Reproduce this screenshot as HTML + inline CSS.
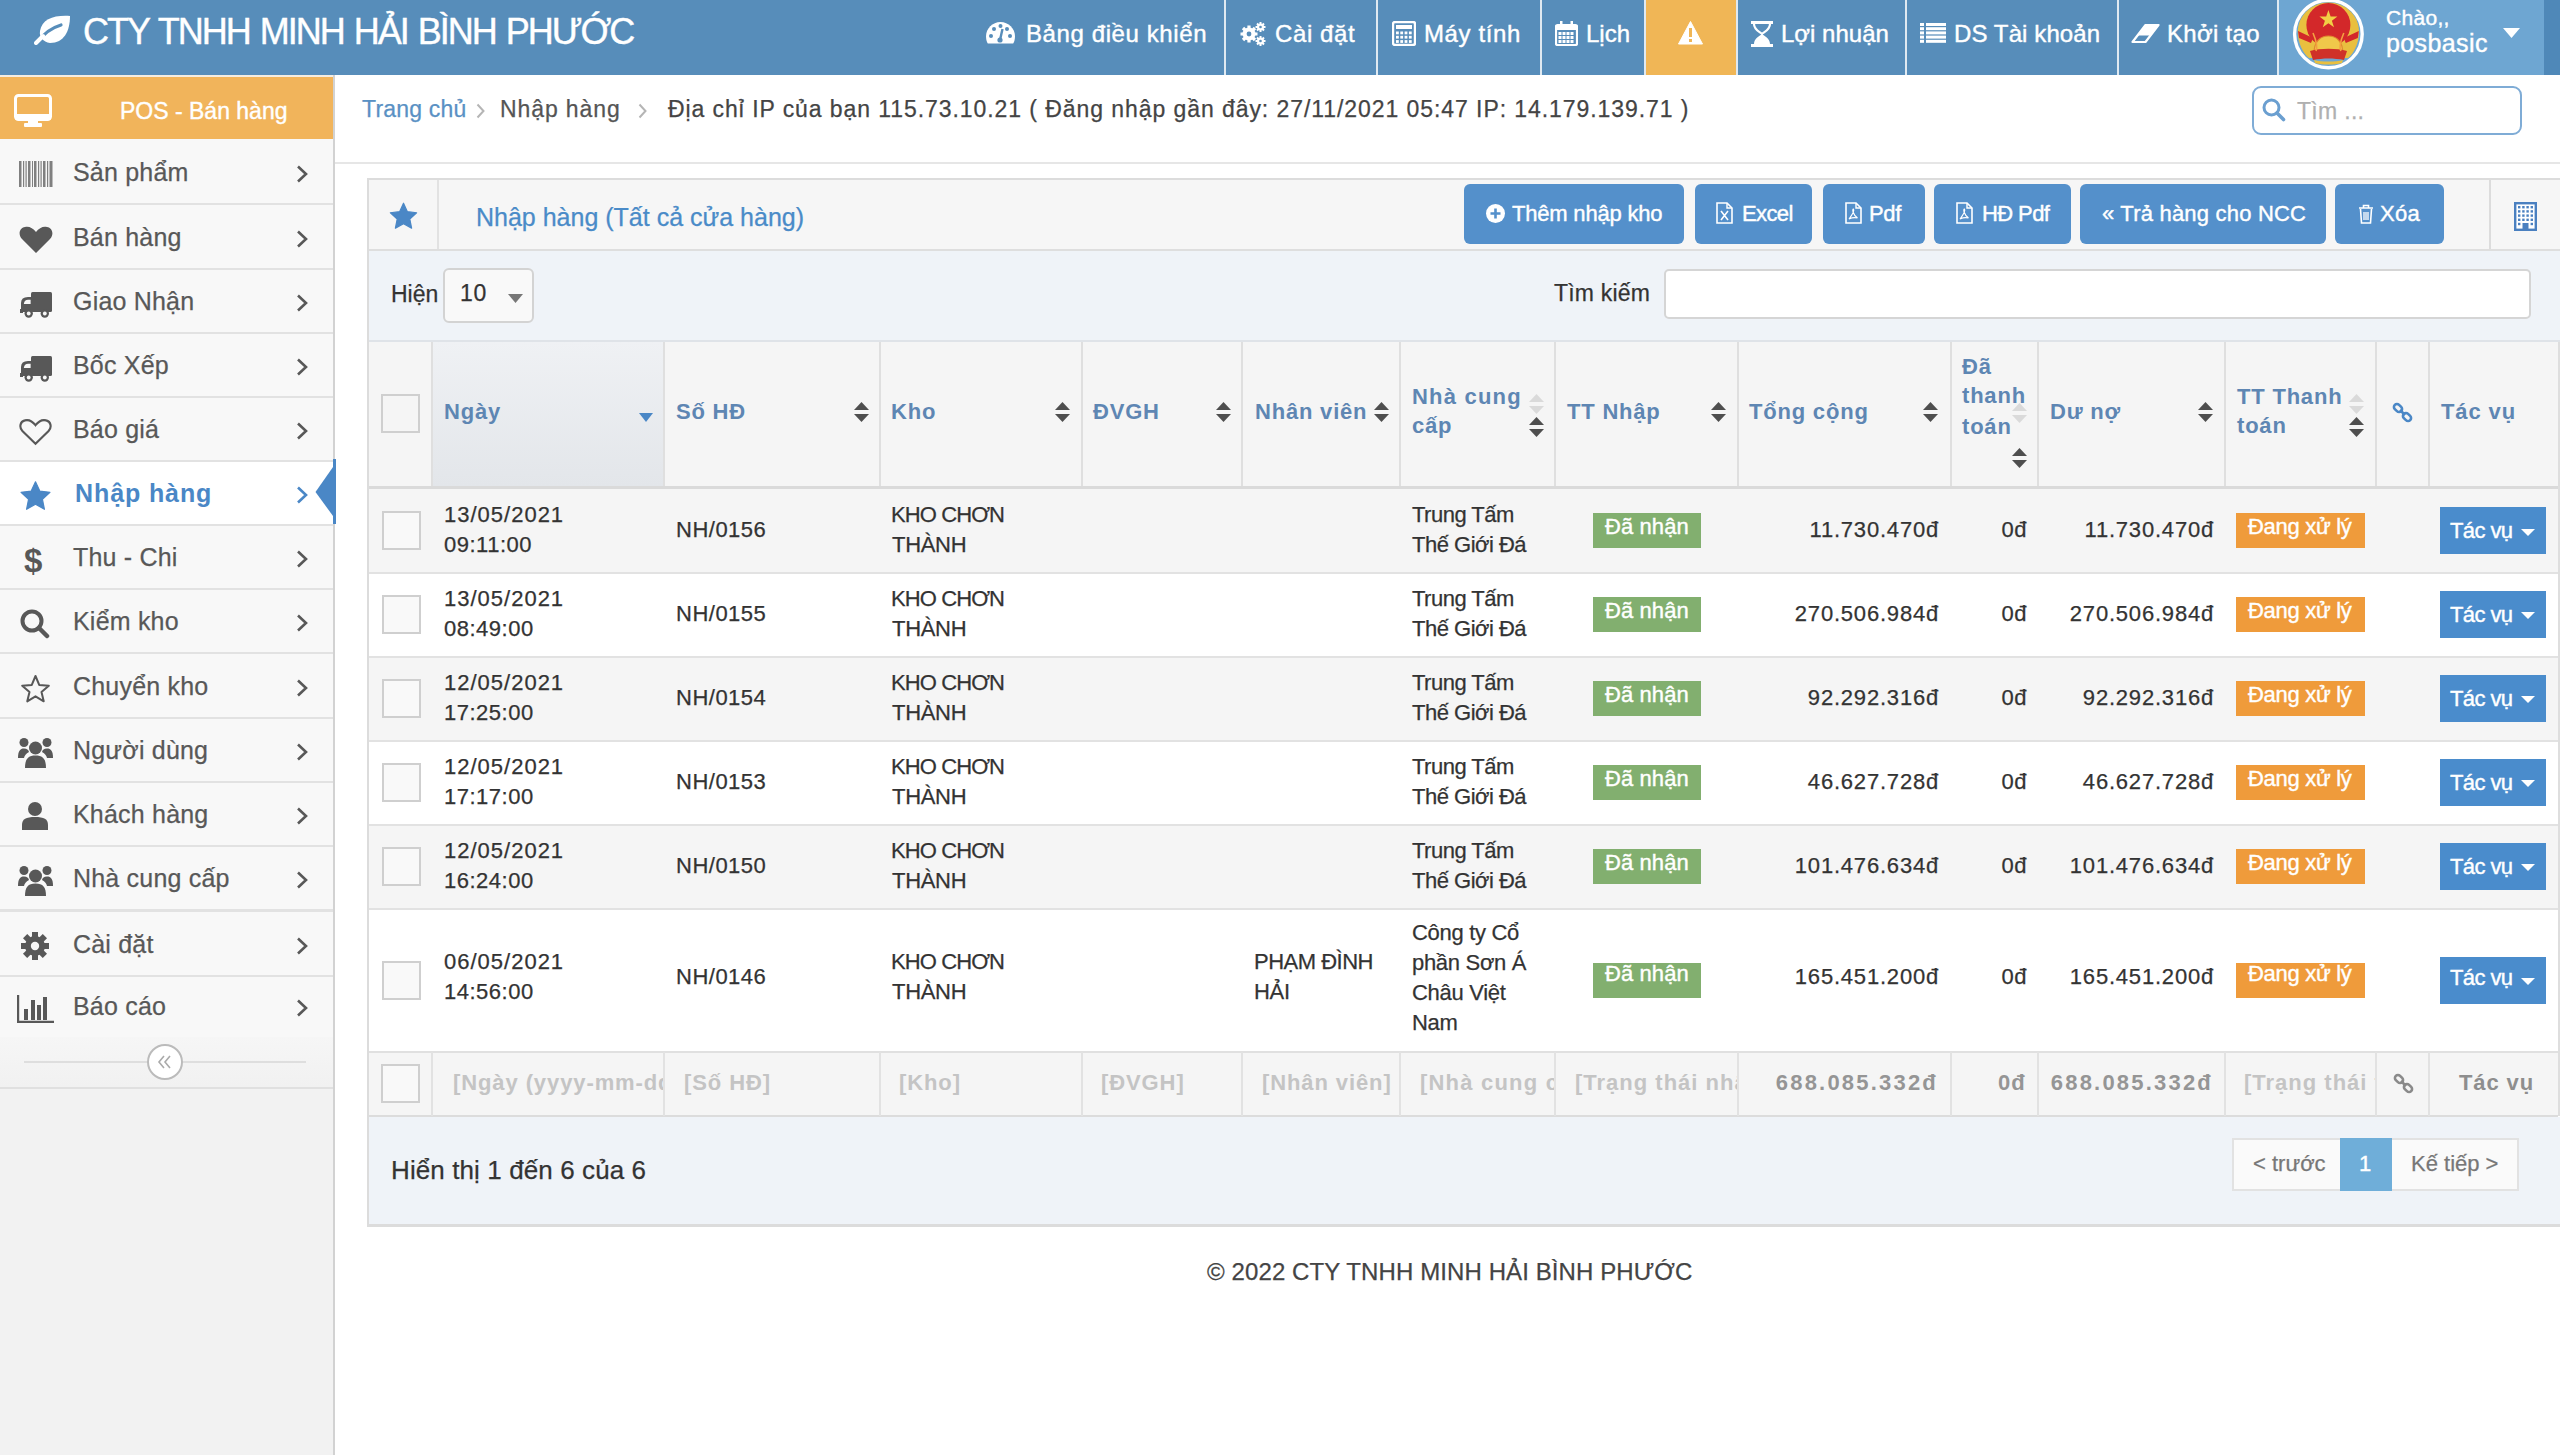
<!DOCTYPE html><html><head><meta charset="utf-8"><style>
html,body{margin:0;padding:0;}
body{width:2560px;height:1455px;overflow:hidden;position:relative;background:#fff;font-family:"Liberation Sans", sans-serif;}
.t{position:absolute;white-space:nowrap;line-height:1;-webkit-text-stroke-width:0.25px;}
.w{-webkit-text-stroke-width:0.4px;}
.bd{-webkit-text-stroke-width:0;}
.b{position:absolute;}
</style></head><body>
<div class="b" style="left:0px;top:0px;width:2560px;height:75px;background:#578dba"></div>
<div class="b" style="left:2278px;top:0px;width:266px;height:75px;background:#6ea6d2"></div>
<div class="b" style="left:2544px;top:0px;width:16px;height:75px;background:#4f88b8"></div>
<div class="b" style="left:1645px;top:0px;width:91px;height:75px;background:#f0b656"></div>
<div class="b" style="left:1224px;top:0px;width:2px;height:75px;background:#dfe9f1"></div>
<div class="b" style="left:1376px;top:0px;width:2px;height:75px;background:#dfe9f1"></div>
<div class="b" style="left:1540px;top:0px;width:2px;height:75px;background:#dfe9f1"></div>
<div class="b" style="left:1644px;top:0px;width:2px;height:75px;background:#dfe9f1"></div>
<div class="b" style="left:1736px;top:0px;width:2px;height:75px;background:#dfe9f1"></div>
<div class="b" style="left:1905px;top:0px;width:2px;height:75px;background:#dfe9f1"></div>
<div class="b" style="left:2117px;top:0px;width:2px;height:75px;background:#dfe9f1"></div>
<div class="b" style="left:2277px;top:0px;width:2px;height:75px;background:#dfe9f1"></div>
<svg class="b" style="left:34px;top:15px;" width="38" height="30" viewBox="0 0 38 30"><path d="M36 1 C20 0 8 4 6 16 C5 22 9 27 16 28 C30 28 36 16 36 1 Z" fill="#fff"/><path d="M4 27 C10 18 17 13 27 10" stroke="#578dba" stroke-width="3.2" fill="none" stroke-linecap="round"/><path d="M2 28 L9 21" stroke="#fff" stroke-width="4" stroke-linecap="round"/></svg>
<div class="t w" style="left:83px;top:14.0px;font-size:36px;color:#fff;font-weight:400;letter-spacing:-2.0px;word-spacing:2px;">CTY TNHH MINH HẢI BÌNH PHƯỚC</div>
<svg class="b" style="left:986px;top:22px;" width="29" height="22" viewBox="0 0 29 22"><path d="M14.5 0 C6.5 0 0 6.5 0 14.5 C0 17 0.6 19.5 1.8 21.5 L27.2 21.5 C28.4 19.5 29 17 29 14.5 C29 6.5 22.5 0 14.5 0 Z" fill="#fff"/><circle cx="5" cy="14" r="2" fill="#578dba"/><circle cx="8" cy="7" r="2" fill="#578dba"/><circle cx="14.5" cy="4" r="2" fill="#578dba"/><circle cx="24" cy="14" r="2" fill="#578dba"/><circle cx="21" cy="7" r="2" fill="#578dba"/><path d="M14 18 L16.5 7" stroke="#578dba" stroke-width="2.4"/><circle cx="14" cy="18" r="2.6" fill="#578dba"/></svg>
<div class="t w" style="left:1026px;top:22.2px;font-size:24px;color:#fff;font-weight:400;letter-spacing:0.6px;">Bảng điều khiển</div>
<svg class="b" style="left:1240px;top:21px;" width="26" height="26" viewBox="0 0 26 26"><g fill="#fff"><circle cx="9" cy="13" r="6.5"/><g stroke="#fff" stroke-width="3.2"><path d="M9 4.5v17M0.5 13h17M3 7l12 12M15 7L3 19"/></g><circle cx="9" cy="13" r="2.4" fill="#578dba"/><circle cx="20.5" cy="6" r="3.5"/><g stroke="#fff" stroke-width="2"><path d="M20.5 1v10M15.5 6h10M17 2.5l7 7M24 2.5l-7 7"/></g><circle cx="20.5" cy="6" r="1.3" fill="#578dba"/><circle cx="20.5" cy="20" r="3.5"/><g stroke="#fff" stroke-width="2"><path d="M20.5 15v10M15.5 20h10M17 16.5l7 7M24 16.5l-7 7"/></g><circle cx="20.5" cy="20" r="1.3" fill="#578dba"/></g></svg>
<div class="t w" style="left:1275px;top:22.2px;font-size:24px;color:#fff;font-weight:400;letter-spacing:0.6px;">Cài đặt</div>
<svg class="b" style="left:1392px;top:21px;" width="24" height="25" viewBox="0 0 24 25"><rect x="1" y="1" width="22" height="23" rx="2" fill="none" stroke="#fff" stroke-width="2.4"/><rect x="4" y="4" width="16" height="4" fill="#fff"/><rect x="4.0" y="10.5" width="2.8" height="2.8" fill="#fff"/><rect x="8.3" y="10.5" width="2.8" height="2.8" fill="#fff"/><rect x="12.6" y="10.5" width="2.8" height="2.8" fill="#fff"/><rect x="16.9" y="10.5" width="2.8" height="2.8" fill="#fff"/><rect x="4.0" y="14.8" width="2.8" height="2.8" fill="#fff"/><rect x="8.3" y="14.8" width="2.8" height="2.8" fill="#fff"/><rect x="12.6" y="14.8" width="2.8" height="2.8" fill="#fff"/><rect x="16.9" y="14.8" width="2.8" height="2.8" fill="#fff"/><rect x="4.0" y="19.1" width="2.8" height="2.8" fill="#fff"/><rect x="8.3" y="19.1" width="2.8" height="2.8" fill="#fff"/><rect x="12.6" y="19.1" width="2.8" height="2.8" fill="#fff"/><rect x="16.9" y="19.1" width="2.8" height="2.8" fill="#fff"/></svg>
<div class="t w" style="left:1424px;top:22.2px;font-size:24px;color:#fff;font-weight:400;letter-spacing:0.6px;">Máy tính</div>
<svg class="b" style="left:1555px;top:21px;" width="23" height="25" viewBox="0 0 23 25"><rect x="1" y="4" width="21" height="20" rx="1.5" fill="none" stroke="#fff" stroke-width="2.2"/><rect x="1" y="4" width="21" height="5" fill="#fff"/><rect x="5" y="0" width="2.5" height="6" fill="#fff"/><rect x="15.5" y="0" width="2.5" height="6" fill="#fff"/><rect x="3.5" y="11.0" width="3" height="3" fill="#fff"/><rect x="7.5" y="11.0" width="3" height="3" fill="#fff"/><rect x="11.5" y="11.0" width="3" height="3" fill="#fff"/><rect x="15.5" y="11.0" width="3" height="3" fill="#fff"/><rect x="3.5" y="15.0" width="3" height="3" fill="#fff"/><rect x="7.5" y="15.0" width="3" height="3" fill="#fff"/><rect x="11.5" y="15.0" width="3" height="3" fill="#fff"/><rect x="15.5" y="15.0" width="3" height="3" fill="#fff"/><rect x="3.5" y="19.0" width="3" height="3" fill="#fff"/><rect x="7.5" y="19.0" width="3" height="3" fill="#fff"/><rect x="11.5" y="19.0" width="3" height="3" fill="#fff"/><rect x="15.5" y="19.0" width="3" height="3" fill="#fff"/></svg>
<div class="t w" style="left:1586px;top:22.2px;font-size:24px;color:#fff;font-weight:400;letter-spacing:0px;">Lịch</div>
<svg class="b" style="left:1678px;top:21px;" width="25" height="24" viewBox="0 0 25 24"><path d="M12.5 0.5 L24.5 23 L0.5 23 Z" fill="#fff" stroke="#fff" stroke-linejoin="round" stroke-width="1"/><rect x="11" y="7" width="3" height="9" fill="#f0b656"/><rect x="11" y="18" width="3" height="3" fill="#f0b656"/></svg>
<svg class="b" style="left:1751px;top:21px;" width="22" height="26" viewBox="0 0 22 26"><rect x="0" y="0" width="22" height="3" fill="#fff"/><rect x="0" y="23" width="22" height="3" fill="#fff"/><path d="M3 3 C3 9 9 11 11 13 C13 11 19 9 19 3" fill="none" stroke="#fff" stroke-width="2.2"/><path d="M3 23 C3 17 9 15 11 13 C13 15 19 17 19 23 Z" fill="#fff"/></svg>
<div class="t w" style="left:1781px;top:22.2px;font-size:24px;color:#fff;font-weight:400;letter-spacing:0px;">Lợi nhuận</div>
<svg class="b" style="left:1920px;top:23px;" width="26" height="20" viewBox="0 0 26 20"><rect x="0" y="0.0" width="4" height="3" fill="#fff"/><rect x="6" y="0.0" width="20" height="3" fill="#fff"/><rect x="0" y="4.2" width="4" height="3" fill="#fff"/><rect x="6" y="4.2" width="20" height="3" fill="#fff"/><rect x="0" y="8.4" width="4" height="3" fill="#fff"/><rect x="6" y="8.4" width="20" height="3" fill="#fff"/><rect x="0" y="12.6" width="4" height="3" fill="#fff"/><rect x="6" y="12.6" width="20" height="3" fill="#fff"/><rect x="0" y="16.8" width="4" height="3" fill="#fff"/><rect x="6" y="16.8" width="20" height="3" fill="#fff"/></svg>
<div class="t w" style="left:1954px;top:22.2px;font-size:24px;color:#fff;font-weight:400;letter-spacing:0.1px;">DS Tài khoản</div>
<svg class="b" style="left:2131px;top:24px;" width="29" height="20" viewBox="0 0 29 20"><path d="M14.5 1 L27.5 1 L14.5 18 L1.5 18 Z" fill="none" stroke="#fff" stroke-width="2.2" stroke-linejoin="round"/><path d="M14.5 1 L27.5 1 L19.5 11.5 L6.5 11.5 Z" fill="#fff"/></svg>
<div class="t w" style="left:2167px;top:22.2px;font-size:24px;color:#fff;font-weight:400;letter-spacing:0.3px;">Khởi tạo</div>
<svg class="b" style="left:2292px;top:-2px;" width="74" height="74" viewBox="0 0 74 74"><circle cx="36.4" cy="36" r="33.8" fill="#6ea6d2" stroke="#fff" stroke-width="3.4"/><path d="M36.4 4.5 C53 4.5 67 17 67 34 C67 45 62 55 56 60 L17 60 C11 55 5.8 45 5.8 34 C5.8 17 20 4.5 36.4 4.5 Z" fill="#e9bf3f"/><circle cx="36.4" cy="27" r="22" fill="#d3282a"/><path d="M6 33 L21 40 L19 45 L7 40 Z M66.8 33 L51.8 40 L53.8 45 L65.8 40 Z" fill="#d3282a"/><path d="M36.4 12 L38.6 18.6 L45.4 18.6 L39.9 22.7 L42 29.3 L36.4 25.2 L30.8 29.3 L32.9 22.7 L27.4 18.6 L34.2 18.6 Z" fill="#f2cf45"/><path d="M22 55 C22 44 28 38 36.4 38 C44.8 38 50.8 44 50.8 55 Z" fill="#f0c84a" stroke="#e08a30" stroke-width="1.2"/><path d="M18 53 C28 50 45 50 55 53 L52 62 C42 60 31 60 21 62 Z" fill="#cf3128"/><path d="M22 62 C30 64 43 64 51 62 L50 65 C42 67 31 67 23 65 Z" fill="#e9bf3f"/><path d="M21 35 C24 42 26 48 24 53 M51.8 35 C48.8 42 46.8 48 48.8 53" stroke="#f3a040" stroke-width="1.6" fill="none"/></svg>
<div class="t w" style="left:2386px;top:6.7px;font-size:21px;color:#fff;font-weight:400;letter-spacing:0.3px;">Chào,,</div>
<div class="t w" style="left:2386px;top:31.3px;font-size:25px;color:#fff;font-weight:400;letter-spacing:0.4px;">posbasic</div>
<svg class="b" style="left:2503px;top:28px;" width="17" height="10" viewBox="0 0 17 10"><path d="M0 0 L17 0 L8.5 10 Z" fill="#fff"/></svg>
<div class="b" style="left:0px;top:75px;width:333px;height:1380px;background:#f2f2f2"></div>
<div class="b" style="left:333px;top:75px;width:2px;height:1380px;background:#d2d2d2"></div>
<div class="b" style="left:0px;top:75px;width:333px;height:2px;background:#f4ede2"></div>
<div class="b" style="left:0px;top:77px;width:333px;height:62px;background:#f1b45b"></div>
<svg class="b" style="left:14px;top:94px;" width="38" height="33" viewBox="0 0 38 33"><rect x="1.5" y="1.5" width="35" height="24" rx="3" fill="none" stroke="#fff" stroke-width="3"/><rect x="1.5" y="20" width="35" height="6" fill="#fff"/><rect x="14" y="26" width="10" height="4" fill="#fff"/><rect x="10" y="29" width="18" height="4" rx="1" fill="#fff"/></svg>
<div class="t w" style="left:120px;top:99.5px;font-size:23px;color:#fff;font-weight:400;letter-spacing:0px;">POS - Bán hàng</div>
<div class="b" style="left:0px;top:139px;width:333px;height:64px;background:#f8f8f8"></div>
<div class="b" style="left:0px;top:203px;width:333px;height:2px;background:#e2e2e2"></div>
<svg class="b" style="left:19px;top:161px;" width="34" height="26" viewBox="0 0 34 26"><rect x="0" y="0" width="2.5" height="26" fill="#808080"/><rect x="4" y="0" width="1.2" height="26" fill="#808080"/><rect x="6.5" y="0" width="1.2" height="26" fill="#808080"/><rect x="9" y="0" width="2.5" height="26" fill="#808080"/><rect x="13" y="0" width="1" height="26" fill="#808080"/><rect x="15" y="0" width="2.5" height="26" fill="#808080"/><rect x="19" y="0" width="1.2" height="26" fill="#808080"/><rect x="21.5" y="0" width="1.2" height="26" fill="#808080"/><rect x="24" y="0" width="2.5" height="26" fill="#808080"/><rect x="28" y="0" width="1.2" height="26" fill="#808080"/><rect x="30.5" y="0" width="3" height="26" fill="#808080"/></svg>
<div class="t" style="left:73px;top:159.8px;font-size:25px;color:#585858;font-weight:400;letter-spacing:0.2px;">Sản phẩm</div>
<svg class="b" style="left:296px;top:165px;" width="12" height="18" viewBox="0 0 12 18"><path d="M2 1.5 L10 9 L2 16.5" fill="none" stroke="#585858" stroke-width="2.6"/></svg>
<div class="b" style="left:0px;top:205px;width:333px;height:63px;background:#f8f8f8"></div>
<div class="b" style="left:0px;top:268px;width:333px;height:2px;background:#e2e2e2"></div>
<svg class="b" style="left:19px;top:226px;" width="34" height="28" viewBox="0 0 34 28"><path d="M17 27 L3 13 C-1 9 0 2 6 1 C10 0 14 2 17 6 C20 2 24 0 28 1 C34 2 35 9 31 13 Z" fill="#585858"/></svg>
<div class="t" style="left:73px;top:224.8px;font-size:25px;color:#585858;font-weight:400;letter-spacing:0.2px;">Bán hàng</div>
<svg class="b" style="left:296px;top:230px;" width="12" height="18" viewBox="0 0 12 18"><path d="M2 1.5 L10 9 L2 16.5" fill="none" stroke="#585858" stroke-width="2.6"/></svg>
<div class="b" style="left:0px;top:270px;width:333px;height:62px;background:#f8f8f8"></div>
<div class="b" style="left:0px;top:332px;width:333px;height:2px;background:#e2e2e2"></div>
<svg class="b" style="left:20px;top:292px;" width="33" height="26" viewBox="0 0 33 26"><rect x="11" y="0" width="21" height="20" rx="1.5" fill="#585858"/><path d="M1 20 L1 11 Q1 5 8 5 L12 5 L12 20 Z" fill="#585858"/><path d="M3.8 12 Q4.5 7.8 8 7.8 L10.6 7.8 L10.6 12 Z" fill="#f8f8f8"/><rect x="0" y="17" width="3" height="4" fill="#585858"/><circle cx="8.7" cy="21.5" r="4.2" fill="#585858"/><circle cx="24.8" cy="21.5" r="4.2" fill="#585858"/><circle cx="8.7" cy="21.5" r="1.9" fill="#f8f8f8"/><circle cx="24.8" cy="21.5" r="1.9" fill="#f8f8f8"/></svg>
<div class="t" style="left:73px;top:288.8px;font-size:25px;color:#585858;font-weight:400;letter-spacing:0.2px;">Giao Nhận</div>
<svg class="b" style="left:296px;top:294px;" width="12" height="18" viewBox="0 0 12 18"><path d="M2 1.5 L10 9 L2 16.5" fill="none" stroke="#585858" stroke-width="2.6"/></svg>
<div class="b" style="left:0px;top:334px;width:333px;height:62px;background:#f8f8f8"></div>
<div class="b" style="left:0px;top:396px;width:333px;height:2px;background:#e2e2e2"></div>
<svg class="b" style="left:20px;top:356px;" width="33" height="26" viewBox="0 0 33 26"><rect x="11" y="0" width="21" height="20" rx="1.5" fill="#585858"/><path d="M1 20 L1 11 Q1 5 8 5 L12 5 L12 20 Z" fill="#585858"/><path d="M3.8 12 Q4.5 7.8 8 7.8 L10.6 7.8 L10.6 12 Z" fill="#f8f8f8"/><rect x="0" y="17" width="3" height="4" fill="#585858"/><circle cx="8.7" cy="21.5" r="4.2" fill="#585858"/><circle cx="24.8" cy="21.5" r="4.2" fill="#585858"/><circle cx="8.7" cy="21.5" r="1.9" fill="#f8f8f8"/><circle cx="24.8" cy="21.5" r="1.9" fill="#f8f8f8"/></svg>
<div class="t" style="left:73px;top:352.8px;font-size:25px;color:#585858;font-weight:400;letter-spacing:0.2px;">Bốc Xếp</div>
<svg class="b" style="left:296px;top:358px;" width="12" height="18" viewBox="0 0 12 18"><path d="M2 1.5 L10 9 L2 16.5" fill="none" stroke="#585858" stroke-width="2.6"/></svg>
<div class="b" style="left:0px;top:398px;width:333px;height:62px;background:#f8f8f8"></div>
<div class="b" style="left:0px;top:460px;width:333px;height:2px;background:#e2e2e2"></div>
<svg class="b" style="left:19px;top:418px;" width="33" height="28" viewBox="0 0 34 28"><path d="M17 26 L3.5 13 C0 9.5 1 3 6 2 C10 1 14 3 17 7 C20 3 24 1 28 2 C33 3 34 9.5 30.5 13 Z" fill="none" stroke="#585858" stroke-width="2.2"/></svg>
<div class="t" style="left:73px;top:416.8px;font-size:25px;color:#585858;font-weight:400;letter-spacing:0.2px;">Báo giá</div>
<svg class="b" style="left:296px;top:422px;" width="12" height="18" viewBox="0 0 12 18"><path d="M2 1.5 L10 9 L2 16.5" fill="none" stroke="#585858" stroke-width="2.6"/></svg>
<div class="b" style="left:0px;top:462px;width:333px;height:62px;background:#ffffff"></div>
<div class="b" style="left:0px;top:524px;width:333px;height:2px;background:#e2e2e2"></div>
<svg class="b" style="left:20px;top:481px;" width="31" height="31" viewBox="0 0 31 31"><path d="M15.50 0.80 L19.79 10.10 L29.96 11.30 L22.44 18.25 L24.43 28.30 L15.50 23.30 L6.57 28.30 L8.56 18.25 L1.04 11.30 L11.21 10.10 Z" fill="#4a87c6" stroke="#4a87c6" stroke-width="1.2" stroke-linejoin="round"/></svg>
<div class="t bd" style="left:75px;top:480.8px;font-size:25px;color:#4a87c6;font-weight:700;letter-spacing:0.9px;">Nhập hàng</div>
<svg class="b" style="left:296px;top:486px;" width="12" height="18" viewBox="0 0 12 18"><path d="M2 1.5 L10 9 L2 16.5" fill="none" stroke="#4a87c6" stroke-width="2.6"/></svg>
<svg class="b" style="left:315px;top:459px;" width="21" height="65" viewBox="0 0 21 65"><path d="M18 8 L18 57 L0.5 33 Z" fill="#4a87c6"/><rect x="18" y="0" width="3" height="65" fill="#4a87c6"/></svg>
<div class="b" style="left:0px;top:526px;width:333px;height:62px;background:#f8f8f8"></div>
<div class="b" style="left:0px;top:588px;width:333px;height:2px;background:#e2e2e2"></div>
<div class="t bd" style="left:24px;top:544.1px;font-size:33px;color:#585858;font-weight:700;letter-spacing:0px;">$</div>
<div class="t" style="left:73px;top:544.8px;font-size:25px;color:#585858;font-weight:400;letter-spacing:0.2px;">Thu - Chi</div>
<svg class="b" style="left:296px;top:550px;" width="12" height="18" viewBox="0 0 12 18"><path d="M2 1.5 L10 9 L2 16.5" fill="none" stroke="#585858" stroke-width="2.6"/></svg>
<div class="b" style="left:0px;top:590px;width:333px;height:62px;background:#f8f8f8"></div>
<div class="b" style="left:0px;top:652px;width:333px;height:2px;background:#e2e2e2"></div>
<svg class="b" style="left:20px;top:609px;" width="30" height="30" viewBox="0 0 30 30"><circle cx="12" cy="12" r="9.5" fill="none" stroke="#585858" stroke-width="4"/><path d="M19 19 L27 27" stroke="#585858" stroke-width="4.5" stroke-linecap="round"/></svg>
<div class="t" style="left:73px;top:608.8px;font-size:25px;color:#585858;font-weight:400;letter-spacing:0.2px;">Kiểm kho</div>
<svg class="b" style="left:296px;top:614px;" width="12" height="18" viewBox="0 0 12 18"><path d="M2 1.5 L10 9 L2 16.5" fill="none" stroke="#585858" stroke-width="2.6"/></svg>
<div class="b" style="left:0px;top:654px;width:333px;height:63px;background:#f8f8f8"></div>
<div class="b" style="left:0px;top:717px;width:333px;height:2px;background:#e2e2e2"></div>
<svg class="b" style="left:20px;top:674px;" width="31" height="31" viewBox="0 0 31 31"><path d="M15.50 2.00 L19.20 10.90 L28.81 11.67 L21.49 17.95 L23.73 27.33 L15.50 22.30 L7.27 27.33 L9.51 17.95 L2.19 11.67 L11.80 10.90 Z" fill="none" stroke="#585858" stroke-width="2" stroke-linejoin="round"/></svg>
<div class="t" style="left:73px;top:673.8px;font-size:25px;color:#585858;font-weight:400;letter-spacing:0.2px;">Chuyển kho</div>
<svg class="b" style="left:296px;top:679px;" width="12" height="18" viewBox="0 0 12 18"><path d="M2 1.5 L10 9 L2 16.5" fill="none" stroke="#585858" stroke-width="2.6"/></svg>
<div class="b" style="left:0px;top:719px;width:333px;height:62px;background:#f8f8f8"></div>
<div class="b" style="left:0px;top:781px;width:333px;height:2px;background:#e2e2e2"></div>
<svg class="b" style="left:18px;top:737px;" width="35" height="31" viewBox="0 0 35 31"><circle cx="17.5" cy="11" r="6.5" fill="#585858"/><path d="M7 31 C7 22 10 18.5 17.5 18.5 C25 18.5 28 22 28 31 Z" fill="#585858"/><circle cx="6" cy="5.5" r="4.5" fill="#585858"/><circle cx="29" cy="5.5" r="4.5" fill="#585858"/><path d="M0 21 C0 14 2 11.5 6 11.5 C9 11.5 10.5 13 11 15 C8 16.5 6.5 18.5 6 21 Z" fill="#585858"/><path d="M35 21 C35 14 33 11.5 29 11.5 C26 11.5 24.5 13 24 15 C27 16.5 28.5 18.5 29 21 Z" fill="#585858"/></svg>
<div class="t" style="left:73px;top:737.8px;font-size:25px;color:#585858;font-weight:400;letter-spacing:0.2px;">Người dùng</div>
<svg class="b" style="left:296px;top:743px;" width="12" height="18" viewBox="0 0 12 18"><path d="M2 1.5 L10 9 L2 16.5" fill="none" stroke="#585858" stroke-width="2.6"/></svg>
<div class="b" style="left:0px;top:783px;width:333px;height:62px;background:#f8f8f8"></div>
<div class="b" style="left:0px;top:845px;width:333px;height:2px;background:#e2e2e2"></div>
<svg class="b" style="left:22px;top:802px;" width="26" height="28" viewBox="0 0 26 28"><circle cx="13" cy="7" r="7" fill="#585858"/><path d="M0 28 L0 23 C0 17 4 15 13 15 C22 15 26 17 26 23 L26 28 Z" fill="#585858"/></svg>
<div class="t" style="left:73px;top:801.8px;font-size:25px;color:#585858;font-weight:400;letter-spacing:0.2px;">Khách hàng</div>
<svg class="b" style="left:296px;top:807px;" width="12" height="18" viewBox="0 0 12 18"><path d="M2 1.5 L10 9 L2 16.5" fill="none" stroke="#585858" stroke-width="2.6"/></svg>
<div class="b" style="left:0px;top:847px;width:333px;height:62px;background:#f8f8f8"></div>
<div class="b" style="left:0px;top:909px;width:333px;height:3px;background:#e2e2e2"></div>
<svg class="b" style="left:18px;top:865px;" width="35" height="31" viewBox="0 0 35 31"><circle cx="17.5" cy="11" r="6.5" fill="#585858"/><path d="M7 31 C7 22 10 18.5 17.5 18.5 C25 18.5 28 22 28 31 Z" fill="#585858"/><circle cx="6" cy="5.5" r="4.5" fill="#585858"/><circle cx="29" cy="5.5" r="4.5" fill="#585858"/><path d="M0 21 C0 14 2 11.5 6 11.5 C9 11.5 10.5 13 11 15 C8 16.5 6.5 18.5 6 21 Z" fill="#585858"/><path d="M35 21 C35 14 33 11.5 29 11.5 C26 11.5 24.5 13 24 15 C27 16.5 28.5 18.5 29 21 Z" fill="#585858"/></svg>
<div class="t" style="left:73px;top:865.8px;font-size:25px;color:#585858;font-weight:400;letter-spacing:0.2px;">Nhà cung cấp</div>
<svg class="b" style="left:296px;top:871px;" width="12" height="18" viewBox="0 0 12 18"><path d="M2 1.5 L10 9 L2 16.5" fill="none" stroke="#585858" stroke-width="2.6"/></svg>
<div class="b" style="left:0px;top:912px;width:333px;height:63px;background:#f8f8f8"></div>
<div class="b" style="left:0px;top:975px;width:333px;height:2px;background:#e2e2e2"></div>
<svg class="b" style="left:21px;top:932px;" width="28" height="28" viewBox="0 0 28 28"><g fill="#585858"><circle cx="14" cy="14" r="10"/><rect x="11" y="0" width="6" height="28" transform="rotate(0 14 14)"/><rect x="11" y="0" width="6" height="28" transform="rotate(45 14 14)"/><rect x="11" y="0" width="6" height="28" transform="rotate(90 14 14)"/><rect x="11" y="0" width="6" height="28" transform="rotate(135 14 14)"/></g><circle cx="14" cy="14" r="4.2" fill="#f8f8f8"/></svg>
<div class="t" style="left:73px;top:931.8px;font-size:25px;color:#585858;font-weight:400;letter-spacing:0.2px;">Cài đặt</div>
<svg class="b" style="left:296px;top:937px;" width="12" height="18" viewBox="0 0 12 18"><path d="M2 1.5 L10 9 L2 16.5" fill="none" stroke="#585858" stroke-width="2.6"/></svg>
<div class="b" style="left:0px;top:977px;width:333px;height:60px;background:#f8f8f8"></div>
<svg class="b" style="left:17px;top:995px;" width="37" height="28" viewBox="0 0 37 28"><path d="M1 0 L1 27 L37 27" fill="none" stroke="#585858" stroke-width="2.4"/><rect x="7" y="14" width="4" height="11" fill="#585858"/><rect x="14" y="5" width="4" height="20" fill="#585858"/><rect x="20" y="10" width="4" height="15" fill="#585858"/><rect x="26" y="2" width="4" height="23" fill="#585858"/></svg>
<div class="t" style="left:73px;top:993.8px;font-size:25px;color:#585858;font-weight:400;letter-spacing:0.2px;">Báo cáo</div>
<svg class="b" style="left:296px;top:999px;" width="12" height="18" viewBox="0 0 12 18"><path d="M2 1.5 L10 9 L2 16.5" fill="none" stroke="#585858" stroke-width="2.6"/></svg>
<div class="b" style="left:0px;top:1037px;width:333px;height:50px;background:linear-gradient(#f6f6f6,#f1f1f1)"></div>
<div class="b" style="left:0px;top:1087px;width:333px;height:2px;background:#e0e0e0"></div>
<div class="b" style="left:24px;top:1061px;width:282px;height:2px;background:#dedede"></div>
<svg class="b" style="left:147px;top:1044px;" width="36" height="36" viewBox="0 0 36 36"><circle cx="18" cy="18" r="17" fill="#fff" stroke="#bbb" stroke-width="2"/><path d="M17 12 L12 18 L17 24 M23 12 L18 18 L23 24" fill="none" stroke="#aaa" stroke-width="1.6"/></svg>
<div class="t" style="left:362px;top:97.5px;font-size:23px;color:#5a91c4;font-weight:400;letter-spacing:0.2px;">Trang chủ</div>
<svg class="b" style="left:476px;top:103px;" width="9" height="16" viewBox="0 0 9 16"><path d="M1.5 1.5 L7.5 8 L1.5 14.5" fill="none" stroke="#b5b5b5" stroke-width="2"/></svg>
<div class="t" style="left:500px;top:97.5px;font-size:23px;color:#555;font-weight:400;letter-spacing:0.9px;">Nhập hàng</div>
<svg class="b" style="left:638px;top:103px;" width="9" height="16" viewBox="0 0 9 16"><path d="M1.5 1.5 L7.5 8 L1.5 14.5" fill="none" stroke="#b5b5b5" stroke-width="2"/></svg>
<div class="t" style="left:668px;top:97.5px;font-size:23px;color:#444;font-weight:400;letter-spacing:0.93px;">Địa chỉ IP của bạn 115.73.10.21 ( Đăng nhập gần đây: 27/11/2021 05:47 IP: 14.179.139.71 )</div>
<div class="b" style="left:335px;top:162px;width:2225px;height:2px;background:#e6e6e6"></div>
<div class="b" style="left:2252px;top:86px;width:270px;height:49px;box-sizing:border-box;border:2px solid #7facd6;border-radius:9px;background:#fff"></div>
<svg class="b" style="left:2262px;top:98px;" width="24" height="24" viewBox="0 0 24 24"><circle cx="9.5" cy="9.5" r="7.5" fill="none" stroke="#6b9fd0" stroke-width="3"/><path d="M15 15 L21.5 21.5" stroke="#6b9fd0" stroke-width="3.6" stroke-linecap="round"/></svg>
<div class="t" style="left:2297px;top:99.5px;font-size:23px;color:#b0b0b0;font-weight:400;letter-spacing:0.3px;">Tìm ...</div>
<div class="b" style="left:367px;top:178px;width:2193px;height:1048px;background:#fff"></div>
<div class="b" style="left:367px;top:178px;width:2193px;height:2px;background:#dcdcdc"></div>
<div class="b" style="left:367px;top:178px;width:2px;height:1048px;background:#dcdcdc"></div>
<div class="b" style="left:369px;top:180px;width:2191px;height:69px;background:#f6f6f6"></div>
<div class="b" style="left:369px;top:249px;width:2191px;height:2px;background:#dedede"></div>
<div class="b" style="left:437px;top:180px;width:2px;height:69px;background:#e2e2e2"></div>
<svg class="b" style="left:388px;top:201px;" width="31" height="31" viewBox="0 0 31 31"><path d="M15.50 2.20 L19.39 10.64 L28.62 11.74 L21.80 18.05 L23.61 27.16 L15.50 22.62 L7.39 27.16 L9.20 18.05 L2.38 11.74 L11.61 10.64 Z" fill="#4a87c6" stroke="#4a87c6" stroke-width="1.2" stroke-linejoin="round"/></svg>
<div class="t" style="left:476px;top:204.8px;font-size:25px;color:#4a8bc8;font-weight:400;letter-spacing:0px;">Nhập hàng (Tất cả cửa hàng)</div>
<div class="b" style="left:1464px;top:184px;width:220px;height:60px;background:#5490cb;border-radius:6px"></div>
<svg class="b" style="left:1486px;top:204px;" width="19" height="19" viewBox="0 0 19 19"><circle cx="9.5" cy="9.5" r="9.5" fill="#fff"/><path d="M9.5 4.5v10M4.5 9.5h10" stroke="#5490cb" stroke-width="2.6"/></svg>
<div class="t w" style="left:1512px;top:202.9px;font-size:22px;color:#fff;font-weight:400;letter-spacing:-0.2px;">Thêm nhập kho</div>
<div class="b" style="left:1695px;top:184px;width:117px;height:60px;background:#5490cb;border-radius:6px"></div>
<svg class="b" style="left:1716px;top:202px;" width="17" height="22" viewBox="0 0 17 22"><path d="M1 1 L11 1 L16 6 L16 21 L1 21 Z" fill="none" stroke="#fff" stroke-width="1.6"/><path d="M11 1 L11 6 L16 6" fill="none" stroke="#fff" stroke-width="1.4"/><path d="M5 9 L12 18 M12 9 L5 18" stroke="#fff" stroke-width="1.6"/></svg>
<div class="t w" style="left:1742px;top:202.9px;font-size:22px;color:#fff;font-weight:400;letter-spacing:-0.6px;">Excel</div>
<div class="b" style="left:1823px;top:184px;width:102px;height:60px;background:#5490cb;border-radius:6px"></div>
<svg class="b" style="left:1845px;top:202px;" width="17" height="22" viewBox="0 0 17 22"><path d="M1 1 L11 1 L16 6 L16 21 L1 21 Z" fill="none" stroke="#fff" stroke-width="1.6"/><path d="M11 1 L11 6 L16 6" fill="none" stroke="#fff" stroke-width="1.4"/><path d="M4 17 C7 13 10 9 8.5 7 C7 7 7.5 12 12.5 16 C9 15 6 16 4 17Z" fill="none" stroke="#fff" stroke-width="1.1"/></svg>
<div class="t w" style="left:1869px;top:202.9px;font-size:22px;color:#fff;font-weight:400;letter-spacing:-0.3px;">Pdf</div>
<div class="b" style="left:1934px;top:184px;width:137px;height:60px;background:#5490cb;border-radius:6px"></div>
<svg class="b" style="left:1956px;top:202px;" width="17" height="22" viewBox="0 0 17 22"><path d="M1 1 L11 1 L16 6 L16 21 L1 21 Z" fill="none" stroke="#fff" stroke-width="1.6"/><path d="M11 1 L11 6 L16 6" fill="none" stroke="#fff" stroke-width="1.4"/><path d="M4 17 C7 13 10 9 8.5 7 C7 7 7.5 12 12.5 16 C9 15 6 16 4 17Z" fill="none" stroke="#fff" stroke-width="1.1"/></svg>
<div class="t w" style="left:1982px;top:202.9px;font-size:22px;color:#fff;font-weight:400;letter-spacing:-0.6px;">HĐ Pdf</div>
<div class="b" style="left:2080px;top:184px;width:246px;height:60px;background:#5490cb;border-radius:6px"></div>
<div class="t w" style="left:2102px;top:202.9px;font-size:22px;color:#fff;font-weight:400;letter-spacing:0.2px;">« Trả hàng cho NCC</div>
<div class="b" style="left:2335px;top:184px;width:109px;height:60px;background:#5490cb;border-radius:6px"></div>
<svg class="b" style="left:2358px;top:204px;" width="16" height="20" viewBox="0 0 16 20"><path d="M1 4 L15 4 M5.5 4 L5.5 1.5 L10.5 1.5 L10.5 4" fill="none" stroke="#fff" stroke-width="1.6"/><path d="M2.5 5 L3.5 19 L12.5 19 L13.5 5" fill="none" stroke="#fff" stroke-width="1.6"/><path d="M6 8 L6 16 M8 8 L8 16 M10 8 L10 16" stroke="#fff" stroke-width="1.3"/></svg>
<div class="t w" style="left:2380px;top:202.9px;font-size:22px;color:#fff;font-weight:400;letter-spacing:0.3px;">Xóa</div>
<div class="b" style="left:2489px;top:180px;width:2px;height:69px;background:#dcdcdc"></div>
<svg class="b" style="left:2514px;top:202px;" width="23" height="29" viewBox="0 0 23 29"><rect x="1.2" y="1.2" width="20.6" height="26.6" fill="#fff" stroke="#4a80c0" stroke-width="2.4"/><rect x="4.0" y="4.0" width="2.4" height="2.4" fill="#4a80c0"/><rect x="8.2" y="4.0" width="2.4" height="2.4" fill="#4a80c0"/><rect x="12.4" y="4.0" width="2.4" height="2.4" fill="#4a80c0"/><rect x="16.6" y="4.0" width="2.4" height="2.4" fill="#4a80c0"/><rect x="4.0" y="8.2" width="2.4" height="2.4" fill="#4a80c0"/><rect x="8.2" y="8.2" width="2.4" height="2.4" fill="#4a80c0"/><rect x="12.4" y="8.2" width="2.4" height="2.4" fill="#4a80c0"/><rect x="16.6" y="8.2" width="2.4" height="2.4" fill="#4a80c0"/><rect x="4.0" y="12.4" width="2.4" height="2.4" fill="#4a80c0"/><rect x="8.2" y="12.4" width="2.4" height="2.4" fill="#4a80c0"/><rect x="12.4" y="12.4" width="2.4" height="2.4" fill="#4a80c0"/><rect x="16.6" y="12.4" width="2.4" height="2.4" fill="#4a80c0"/><rect x="4.0" y="16.6" width="2.4" height="2.4" fill="#4a80c0"/><rect x="8.2" y="16.6" width="2.4" height="2.4" fill="#4a80c0"/><rect x="12.4" y="16.6" width="2.4" height="2.4" fill="#4a80c0"/><rect x="16.6" y="16.6" width="2.4" height="2.4" fill="#4a80c0"/><rect x="4.0" y="20.8" width="2.4" height="2.4" fill="#4a80c0"/><rect x="16.6" y="20.8" width="2.4" height="2.4" fill="#4a80c0"/><rect x="8.5" y="21" width="6" height="7" fill="#4a80c0"/></svg>
<div class="b" style="left:369px;top:251px;width:2191px;height:89px;background:#eff3f8"></div>
<div class="b" style="left:369px;top:340px;width:2191px;height:2px;background:#dfe3e8"></div>
<div class="t" style="left:391px;top:283.0px;font-size:23px;color:#333;font-weight:400;letter-spacing:0px;">Hiện</div>
<div class="b" style="left:443px;top:268px;width:91px;height:55px;box-sizing:border-box;border:2px solid #d3d3d3;border-radius:6px;background:#f9f9f9"></div>
<div class="t" style="left:460px;top:281.5px;font-size:23px;color:#333;font-weight:400;letter-spacing:0.6px;">10</div>
<svg class="b" style="left:508px;top:294px;" width="15" height="9" viewBox="0 0 15 9"><path d="M0 0 L15 0 L7.5 9 Z" fill="#777"/></svg>
<div class="t" style="left:1554px;top:281.5px;font-size:23px;color:#333;font-weight:400;letter-spacing:0.2px;">Tìm kiếm</div>
<div class="b" style="left:1664px;top:269px;width:867px;height:50px;box-sizing:border-box;border:2px solid #d5d5d5;border-radius:5px;background:#fff"></div>
<div class="b" style="left:369px;top:342px;width:2189px;height:144px;background:#f5f5f5"></div>
<div class="b" style="left:433px;top:342px;width:231px;height:144px;background:linear-gradient(#eff1f4,#e3e6ea)"></div>
<div class="b" style="left:369px;top:486px;width:2191px;height:3px;background:#dadada"></div>
<div class="b" style="left:431px;top:342px;width:2px;height:144px;background:#dfdfdf"></div>
<div class="b" style="left:663px;top:342px;width:2px;height:144px;background:#dfdfdf"></div>
<div class="b" style="left:879px;top:342px;width:2px;height:144px;background:#dfdfdf"></div>
<div class="b" style="left:1081px;top:342px;width:2px;height:144px;background:#dfdfdf"></div>
<div class="b" style="left:1241px;top:342px;width:2px;height:144px;background:#dfdfdf"></div>
<div class="b" style="left:1399px;top:342px;width:2px;height:144px;background:#dfdfdf"></div>
<div class="b" style="left:1554px;top:342px;width:2px;height:144px;background:#dfdfdf"></div>
<div class="b" style="left:1737px;top:342px;width:2px;height:144px;background:#dfdfdf"></div>
<div class="b" style="left:1950px;top:342px;width:2px;height:144px;background:#dfdfdf"></div>
<div class="b" style="left:2037px;top:342px;width:2px;height:144px;background:#dfdfdf"></div>
<div class="b" style="left:2224px;top:342px;width:2px;height:144px;background:#dfdfdf"></div>
<div class="b" style="left:2375px;top:342px;width:2px;height:144px;background:#dfdfdf"></div>
<div class="b" style="left:2428px;top:342px;width:2px;height:144px;background:#dfdfdf"></div>
<div class="b" style="left:381px;top:394px;width:39px;height:39px;box-sizing:border-box;border:2px solid #cfcfcf;background:#f5f5f5"></div>
<div class="t bd" style="left:444px;top:400.9px;font-size:22px;color:#5e86b3;font-weight:700;letter-spacing:0.8px;">Ngày</div>
<svg class="b" style="left:639px;top:413px;" width="14" height="9" viewBox="0 0 14 9"><path d="M0 0 L14 0 L7 9 Z" fill="#4a87c6"/></svg>
<div class="t bd" style="left:676px;top:400.9px;font-size:22px;color:#5e86b3;font-weight:700;letter-spacing:0.8px;">Số HĐ</div>
<svg class="b" style="left:854px;top:402px;" width="15" height="20" viewBox="0 0 15 20"><path d="M7.5 0 L15 8 L0 8 Z M0 12 L15 12 L7.5 20 Z" fill="#4e4e4e"/></svg>
<div class="t bd" style="left:891px;top:400.9px;font-size:22px;color:#5e86b3;font-weight:700;letter-spacing:0.8px;">Kho</div>
<svg class="b" style="left:1055px;top:402px;" width="15" height="20" viewBox="0 0 15 20"><path d="M7.5 0 L15 8 L0 8 Z M0 12 L15 12 L7.5 20 Z" fill="#4e4e4e"/></svg>
<div class="t bd" style="left:1093px;top:400.9px;font-size:22px;color:#5e86b3;font-weight:700;letter-spacing:0.8px;">ĐVGH</div>
<svg class="b" style="left:1216px;top:402px;" width="15" height="20" viewBox="0 0 15 20"><path d="M7.5 0 L15 8 L0 8 Z M0 12 L15 12 L7.5 20 Z" fill="#4e4e4e"/></svg>
<div class="t bd" style="left:1255px;top:400.9px;font-size:22px;color:#5e86b3;font-weight:700;letter-spacing:0.8px;">Nhân viên</div>
<svg class="b" style="left:1374px;top:402px;" width="15" height="20" viewBox="0 0 15 20"><path d="M7.5 0 L15 8 L0 8 Z M0 12 L15 12 L7.5 20 Z" fill="#4e4e4e"/></svg>
<div class="t bd" style="left:1412px;top:385.9px;font-size:22px;color:#5e86b3;font-weight:700;letter-spacing:1.2px;">Nhà cung</div>
<div class="t bd" style="left:1412px;top:415.4px;font-size:22px;color:#5e86b3;font-weight:700;letter-spacing:0.8px;">cấp</div>
<svg class="b" style="left:1529px;top:394px;" width="15" height="20" viewBox="0 0 15 20"><path d="M7.5 0 L15 8 L0 8 Z M0 12 L15 12 L7.5 20 Z" fill="#dadada"/></svg>
<svg class="b" style="left:1529px;top:417px;" width="15" height="20" viewBox="0 0 15 20"><path d="M7.5 0 L15 8 L0 8 Z M0 12 L15 12 L7.5 20 Z" fill="#4e4e4e"/></svg>
<div class="t bd" style="left:1567px;top:400.9px;font-size:22px;color:#5e86b3;font-weight:700;letter-spacing:0.8px;">TT Nhập</div>
<svg class="b" style="left:1711px;top:402px;" width="15" height="20" viewBox="0 0 15 20"><path d="M7.5 0 L15 8 L0 8 Z M0 12 L15 12 L7.5 20 Z" fill="#4e4e4e"/></svg>
<div class="t bd" style="left:1749px;top:400.9px;font-size:22px;color:#5e86b3;font-weight:700;letter-spacing:0.8px;">Tổng cộng</div>
<svg class="b" style="left:1923px;top:402px;" width="15" height="20" viewBox="0 0 15 20"><path d="M7.5 0 L15 8 L0 8 Z M0 12 L15 12 L7.5 20 Z" fill="#4e4e4e"/></svg>
<div class="t bd" style="left:1962px;top:355.9px;font-size:22px;color:#5e86b3;font-weight:700;letter-spacing:0.8px;">Đã</div>
<div class="t bd" style="left:1962px;top:385.4px;font-size:22px;color:#5e86b3;font-weight:700;letter-spacing:0.8px;">thanh</div>
<div class="t bd" style="left:1962px;top:415.9px;font-size:22px;color:#5e86b3;font-weight:700;letter-spacing:0.8px;">toán</div>
<svg class="b" style="left:2012px;top:403px;" width="15" height="20" viewBox="0 0 15 20"><path d="M7.5 0 L15 8 L0 8 Z M0 12 L15 12 L7.5 20 Z" fill="#dadada"/></svg>
<svg class="b" style="left:2012px;top:448px;" width="15" height="20" viewBox="0 0 15 20"><path d="M7.5 0 L15 8 L0 8 Z M0 12 L15 12 L7.5 20 Z" fill="#4e4e4e"/></svg>
<div class="t bd" style="left:2050px;top:400.9px;font-size:22px;color:#5e86b3;font-weight:700;letter-spacing:0.8px;">Dư nợ</div>
<svg class="b" style="left:2198px;top:402px;" width="15" height="20" viewBox="0 0 15 20"><path d="M7.5 0 L15 8 L0 8 Z M0 12 L15 12 L7.5 20 Z" fill="#4e4e4e"/></svg>
<div class="t bd" style="left:2237px;top:385.9px;font-size:22px;color:#5e86b3;font-weight:700;letter-spacing:0.8px;">TT Thanh</div>
<div class="t bd" style="left:2237px;top:415.4px;font-size:22px;color:#5e86b3;font-weight:700;letter-spacing:0.8px;">toán</div>
<svg class="b" style="left:2349px;top:394px;" width="15" height="20" viewBox="0 0 15 20"><path d="M7.5 0 L15 8 L0 8 Z M0 12 L15 12 L7.5 20 Z" fill="#dadada"/></svg>
<svg class="b" style="left:2349px;top:417px;" width="15" height="20" viewBox="0 0 15 20"><path d="M7.5 0 L15 8 L0 8 Z M0 12 L15 12 L7.5 20 Z" fill="#4e4e4e"/></svg>
<svg class="b" style="left:2392px;top:402px;" width="21" height="21" viewBox="0 0 21 21"><g fill="none" stroke="#4a87c6" stroke-width="2.6"><rect x="1.5" y="3" width="9" height="6" rx="3" transform="rotate(45 6 6)"/><rect x="10.5" y="12" width="9" height="6" rx="3" transform="rotate(45 15 15)"/><path d="M8 8 L13 13"/></g></svg>
<div class="t bd" style="left:2441px;top:400.9px;font-size:22px;color:#5e86b3;font-weight:700;letter-spacing:0.9px;">Tác vụ</div>
<div class="b" style="left:369px;top:489px;width:2189px;height:83px;background:#f5f5f5"></div>
<div class="b" style="left:369px;top:572px;width:2189px;height:84px;background:#ffffff"></div>
<div class="b" style="left:369px;top:656px;width:2189px;height:84px;background:#f5f5f5"></div>
<div class="b" style="left:369px;top:740px;width:2189px;height:84px;background:#ffffff"></div>
<div class="b" style="left:369px;top:824px;width:2189px;height:84px;background:#f5f5f5"></div>
<div class="b" style="left:369px;top:908px;width:2189px;height:144px;background:#ffffff"></div>
<div class="b" style="left:369px;top:571.5px;width:2189px;height:2px;background:#e2e2e2"></div>
<div class="b" style="left:382px;top:511px;width:39px;height:39px;box-sizing:border-box;border:2px solid #cfcfcf;background:#f9f9f9"></div>
<div class="t" style="left:444px;top:504.4px;font-size:22px;color:#333;font-weight:400;letter-spacing:1.0px;">13/05/2021</div>
<div class="t" style="left:444px;top:534.4px;font-size:22px;color:#333;font-weight:400;letter-spacing:0.5px;">09:11:00</div>
<div class="t" style="left:676px;top:519.4px;font-size:22px;color:#333;font-weight:400;letter-spacing:0.5px;">NH/0156</div>
<div class="t" style="left:891px;top:504.4px;font-size:22px;color:#333;font-weight:400;letter-spacing:-0.9px;">KHO CHƠN</div>
<div class="t" style="left:892px;top:534.4px;font-size:22px;color:#333;font-weight:400;letter-spacing:-0.3px;">THÀNH</div>
<div class="t" style="left:1412px;top:504.4px;font-size:22px;color:#333;font-weight:400;letter-spacing:-0.5px;">Trung Tấm</div>
<div class="t" style="left:1412px;top:534.4px;font-size:22px;color:#333;font-weight:400;letter-spacing:-0.5px;">Thế Giới Đá</div>
<div class="b" style="left:1593px;top:513px;width:108px;height:35px;background:#82af6f"></div>
<div class="t w" style="left:1605px;top:516.4px;font-size:22px;color:#fff;font-weight:400;letter-spacing:0.1px;">Đã nhận</div>
<div class="t" style="right:621px;top:519.4px;font-size:22px;color:#333;font-weight:400;letter-spacing:0.8px;">11.730.470đ</div>
<div class="t" style="right:533px;top:519.4px;font-size:22px;color:#333;font-weight:400;letter-spacing:0.5px;">0đ</div>
<div class="t" style="right:346px;top:519.4px;font-size:22px;color:#333;font-weight:400;letter-spacing:0.8px;">11.730.470đ</div>
<div class="b" style="left:2236px;top:513px;width:129px;height:35px;background:#ef9b3b"></div>
<div class="t w" style="left:2248px;top:516.4px;font-size:22px;color:#fff;font-weight:400;letter-spacing:-0.3px;">Đang xử lý</div>
<div class="b" style="left:2440px;top:507px;width:106px;height:47px;background:#4a8ccc"></div>
<div class="t w" style="left:2450px;top:520.4px;font-size:22px;color:#fff;font-weight:400;letter-spacing:-0.6px;">Tác vụ</div>
<svg class="b" style="left:2521px;top:529px;" width="14" height="7" viewBox="0 0 14 7"><path d="M0 0 L14 0 L7 7 Z" fill="#fff"/></svg>
<div class="b" style="left:369px;top:655.5px;width:2189px;height:2px;background:#e2e2e2"></div>
<div class="b" style="left:382px;top:595px;width:39px;height:39px;box-sizing:border-box;border:2px solid #cfcfcf;background:#f9f9f9"></div>
<div class="t" style="left:444px;top:587.9px;font-size:22px;color:#333;font-weight:400;letter-spacing:1.0px;">13/05/2021</div>
<div class="t" style="left:444px;top:617.9px;font-size:22px;color:#333;font-weight:400;letter-spacing:0.5px;">08:49:00</div>
<div class="t" style="left:676px;top:602.9px;font-size:22px;color:#333;font-weight:400;letter-spacing:0.5px;">NH/0155</div>
<div class="t" style="left:891px;top:587.9px;font-size:22px;color:#333;font-weight:400;letter-spacing:-0.9px;">KHO CHƠN</div>
<div class="t" style="left:892px;top:617.9px;font-size:22px;color:#333;font-weight:400;letter-spacing:-0.3px;">THÀNH</div>
<div class="t" style="left:1412px;top:587.9px;font-size:22px;color:#333;font-weight:400;letter-spacing:-0.5px;">Trung Tấm</div>
<div class="t" style="left:1412px;top:617.9px;font-size:22px;color:#333;font-weight:400;letter-spacing:-0.5px;">Thế Giới Đá</div>
<div class="b" style="left:1593px;top:597px;width:108px;height:35px;background:#82af6f"></div>
<div class="t w" style="left:1605px;top:599.9px;font-size:22px;color:#fff;font-weight:400;letter-spacing:0.1px;">Đã nhận</div>
<div class="t" style="right:621px;top:602.9px;font-size:22px;color:#333;font-weight:400;letter-spacing:0.8px;">270.506.984đ</div>
<div class="t" style="right:533px;top:602.9px;font-size:22px;color:#333;font-weight:400;letter-spacing:0.5px;">0đ</div>
<div class="t" style="right:346px;top:602.9px;font-size:22px;color:#333;font-weight:400;letter-spacing:0.8px;">270.506.984đ</div>
<div class="b" style="left:2236px;top:597px;width:129px;height:35px;background:#ef9b3b"></div>
<div class="t w" style="left:2248px;top:599.9px;font-size:22px;color:#fff;font-weight:400;letter-spacing:-0.3px;">Đang xử lý</div>
<div class="b" style="left:2440px;top:591px;width:106px;height:47px;background:#4a8ccc"></div>
<div class="t w" style="left:2450px;top:603.9px;font-size:22px;color:#fff;font-weight:400;letter-spacing:-0.6px;">Tác vụ</div>
<svg class="b" style="left:2521px;top:612px;" width="14" height="7" viewBox="0 0 14 7"><path d="M0 0 L14 0 L7 7 Z" fill="#fff"/></svg>
<div class="b" style="left:369px;top:739.5px;width:2189px;height:2px;background:#e2e2e2"></div>
<div class="b" style="left:382px;top:679px;width:39px;height:39px;box-sizing:border-box;border:2px solid #cfcfcf;background:#f9f9f9"></div>
<div class="t" style="left:444px;top:671.9px;font-size:22px;color:#333;font-weight:400;letter-spacing:1.0px;">12/05/2021</div>
<div class="t" style="left:444px;top:701.9px;font-size:22px;color:#333;font-weight:400;letter-spacing:0.5px;">17:25:00</div>
<div class="t" style="left:676px;top:686.9px;font-size:22px;color:#333;font-weight:400;letter-spacing:0.5px;">NH/0154</div>
<div class="t" style="left:891px;top:671.9px;font-size:22px;color:#333;font-weight:400;letter-spacing:-0.9px;">KHO CHƠN</div>
<div class="t" style="left:892px;top:701.9px;font-size:22px;color:#333;font-weight:400;letter-spacing:-0.3px;">THÀNH</div>
<div class="t" style="left:1412px;top:671.9px;font-size:22px;color:#333;font-weight:400;letter-spacing:-0.5px;">Trung Tấm</div>
<div class="t" style="left:1412px;top:701.9px;font-size:22px;color:#333;font-weight:400;letter-spacing:-0.5px;">Thế Giới Đá</div>
<div class="b" style="left:1593px;top:681px;width:108px;height:35px;background:#82af6f"></div>
<div class="t w" style="left:1605px;top:683.9px;font-size:22px;color:#fff;font-weight:400;letter-spacing:0.1px;">Đã nhận</div>
<div class="t" style="right:621px;top:686.9px;font-size:22px;color:#333;font-weight:400;letter-spacing:0.8px;">92.292.316đ</div>
<div class="t" style="right:533px;top:686.9px;font-size:22px;color:#333;font-weight:400;letter-spacing:0.5px;">0đ</div>
<div class="t" style="right:346px;top:686.9px;font-size:22px;color:#333;font-weight:400;letter-spacing:0.8px;">92.292.316đ</div>
<div class="b" style="left:2236px;top:681px;width:129px;height:35px;background:#ef9b3b"></div>
<div class="t w" style="left:2248px;top:683.9px;font-size:22px;color:#fff;font-weight:400;letter-spacing:-0.3px;">Đang xử lý</div>
<div class="b" style="left:2440px;top:675px;width:106px;height:47px;background:#4a8ccc"></div>
<div class="t w" style="left:2450px;top:687.9px;font-size:22px;color:#fff;font-weight:400;letter-spacing:-0.6px;">Tác vụ</div>
<svg class="b" style="left:2521px;top:696px;" width="14" height="7" viewBox="0 0 14 7"><path d="M0 0 L14 0 L7 7 Z" fill="#fff"/></svg>
<div class="b" style="left:369px;top:823.5px;width:2189px;height:2px;background:#e2e2e2"></div>
<div class="b" style="left:382px;top:763px;width:39px;height:39px;box-sizing:border-box;border:2px solid #cfcfcf;background:#f9f9f9"></div>
<div class="t" style="left:444px;top:755.9px;font-size:22px;color:#333;font-weight:400;letter-spacing:1.0px;">12/05/2021</div>
<div class="t" style="left:444px;top:785.9px;font-size:22px;color:#333;font-weight:400;letter-spacing:0.5px;">17:17:00</div>
<div class="t" style="left:676px;top:770.9px;font-size:22px;color:#333;font-weight:400;letter-spacing:0.5px;">NH/0153</div>
<div class="t" style="left:891px;top:755.9px;font-size:22px;color:#333;font-weight:400;letter-spacing:-0.9px;">KHO CHƠN</div>
<div class="t" style="left:892px;top:785.9px;font-size:22px;color:#333;font-weight:400;letter-spacing:-0.3px;">THÀNH</div>
<div class="t" style="left:1412px;top:755.9px;font-size:22px;color:#333;font-weight:400;letter-spacing:-0.5px;">Trung Tấm</div>
<div class="t" style="left:1412px;top:785.9px;font-size:22px;color:#333;font-weight:400;letter-spacing:-0.5px;">Thế Giới Đá</div>
<div class="b" style="left:1593px;top:765px;width:108px;height:35px;background:#82af6f"></div>
<div class="t w" style="left:1605px;top:767.9px;font-size:22px;color:#fff;font-weight:400;letter-spacing:0.1px;">Đã nhận</div>
<div class="t" style="right:621px;top:770.9px;font-size:22px;color:#333;font-weight:400;letter-spacing:0.8px;">46.627.728đ</div>
<div class="t" style="right:533px;top:770.9px;font-size:22px;color:#333;font-weight:400;letter-spacing:0.5px;">0đ</div>
<div class="t" style="right:346px;top:770.9px;font-size:22px;color:#333;font-weight:400;letter-spacing:0.8px;">46.627.728đ</div>
<div class="b" style="left:2236px;top:765px;width:129px;height:35px;background:#ef9b3b"></div>
<div class="t w" style="left:2248px;top:767.9px;font-size:22px;color:#fff;font-weight:400;letter-spacing:-0.3px;">Đang xử lý</div>
<div class="b" style="left:2440px;top:759px;width:106px;height:47px;background:#4a8ccc"></div>
<div class="t w" style="left:2450px;top:771.9px;font-size:22px;color:#fff;font-weight:400;letter-spacing:-0.6px;">Tác vụ</div>
<svg class="b" style="left:2521px;top:780px;" width="14" height="7" viewBox="0 0 14 7"><path d="M0 0 L14 0 L7 7 Z" fill="#fff"/></svg>
<div class="b" style="left:369px;top:907.5px;width:2189px;height:2px;background:#e2e2e2"></div>
<div class="b" style="left:382px;top:847px;width:39px;height:39px;box-sizing:border-box;border:2px solid #cfcfcf;background:#f9f9f9"></div>
<div class="t" style="left:444px;top:839.9px;font-size:22px;color:#333;font-weight:400;letter-spacing:1.0px;">12/05/2021</div>
<div class="t" style="left:444px;top:869.9px;font-size:22px;color:#333;font-weight:400;letter-spacing:0.5px;">16:24:00</div>
<div class="t" style="left:676px;top:854.9px;font-size:22px;color:#333;font-weight:400;letter-spacing:0.5px;">NH/0150</div>
<div class="t" style="left:891px;top:839.9px;font-size:22px;color:#333;font-weight:400;letter-spacing:-0.9px;">KHO CHƠN</div>
<div class="t" style="left:892px;top:869.9px;font-size:22px;color:#333;font-weight:400;letter-spacing:-0.3px;">THÀNH</div>
<div class="t" style="left:1412px;top:839.9px;font-size:22px;color:#333;font-weight:400;letter-spacing:-0.5px;">Trung Tấm</div>
<div class="t" style="left:1412px;top:869.9px;font-size:22px;color:#333;font-weight:400;letter-spacing:-0.5px;">Thế Giới Đá</div>
<div class="b" style="left:1593px;top:849px;width:108px;height:35px;background:#82af6f"></div>
<div class="t w" style="left:1605px;top:851.9px;font-size:22px;color:#fff;font-weight:400;letter-spacing:0.1px;">Đã nhận</div>
<div class="t" style="right:621px;top:854.9px;font-size:22px;color:#333;font-weight:400;letter-spacing:0.8px;">101.476.634đ</div>
<div class="t" style="right:533px;top:854.9px;font-size:22px;color:#333;font-weight:400;letter-spacing:0.5px;">0đ</div>
<div class="t" style="right:346px;top:854.9px;font-size:22px;color:#333;font-weight:400;letter-spacing:0.8px;">101.476.634đ</div>
<div class="b" style="left:2236px;top:849px;width:129px;height:35px;background:#ef9b3b"></div>
<div class="t w" style="left:2248px;top:851.9px;font-size:22px;color:#fff;font-weight:400;letter-spacing:-0.3px;">Đang xử lý</div>
<div class="b" style="left:2440px;top:843px;width:106px;height:47px;background:#4a8ccc"></div>
<div class="t w" style="left:2450px;top:855.9px;font-size:22px;color:#fff;font-weight:400;letter-spacing:-0.6px;">Tác vụ</div>
<svg class="b" style="left:2521px;top:864px;" width="14" height="7" viewBox="0 0 14 7"><path d="M0 0 L14 0 L7 7 Z" fill="#fff"/></svg>
<div class="b" style="left:369px;top:1051.5px;width:2189px;height:2px;background:#e2e2e2"></div>
<div class="b" style="left:382px;top:961px;width:39px;height:39px;box-sizing:border-box;border:2px solid #cfcfcf;background:#f9f9f9"></div>
<div class="t" style="left:444px;top:951.4px;font-size:22px;color:#333;font-weight:400;letter-spacing:1.0px;">06/05/2021</div>
<div class="t" style="left:444px;top:981.4px;font-size:22px;color:#333;font-weight:400;letter-spacing:0.5px;">14:56:00</div>
<div class="t" style="left:676px;top:966.4px;font-size:22px;color:#333;font-weight:400;letter-spacing:0.5px;">NH/0146</div>
<div class="t" style="left:891px;top:951.4px;font-size:22px;color:#333;font-weight:400;letter-spacing:-0.9px;">KHO CHƠN</div>
<div class="t" style="left:892px;top:981.4px;font-size:22px;color:#333;font-weight:400;letter-spacing:-0.3px;">THÀNH</div>
<div class="t" style="left:1254px;top:951.4px;font-size:22px;color:#333;font-weight:400;letter-spacing:-0.5px;">PHẠM ĐÌNH</div>
<div class="t" style="left:1254px;top:981.4px;font-size:22px;color:#333;font-weight:400;letter-spacing:-0.3px;">HẢI</div>
<div class="t" style="left:1412px;top:922.4px;font-size:22px;color:#333;font-weight:400;letter-spacing:-0.3px;">Công ty Cổ</div>
<div class="t" style="left:1412px;top:952.4px;font-size:22px;color:#333;font-weight:400;letter-spacing:-0.3px;">phần Sơn Á</div>
<div class="t" style="left:1412px;top:982.4px;font-size:22px;color:#333;font-weight:400;letter-spacing:-0.3px;">Châu Việt</div>
<div class="t" style="left:1412px;top:1012.4px;font-size:22px;color:#333;font-weight:400;letter-spacing:-0.3px;">Nam</div>
<div class="b" style="left:1593px;top:963px;width:108px;height:35px;background:#82af6f"></div>
<div class="t w" style="left:1605px;top:963.4px;font-size:22px;color:#fff;font-weight:400;letter-spacing:0.1px;">Đã nhận</div>
<div class="t" style="right:621px;top:966.4px;font-size:22px;color:#333;font-weight:400;letter-spacing:0.8px;">165.451.200đ</div>
<div class="t" style="right:533px;top:966.4px;font-size:22px;color:#333;font-weight:400;letter-spacing:0.5px;">0đ</div>
<div class="t" style="right:346px;top:966.4px;font-size:22px;color:#333;font-weight:400;letter-spacing:0.8px;">165.451.200đ</div>
<div class="b" style="left:2236px;top:963px;width:129px;height:35px;background:#ef9b3b"></div>
<div class="t w" style="left:2248px;top:963.4px;font-size:22px;color:#fff;font-weight:400;letter-spacing:-0.3px;">Đang xử lý</div>
<div class="b" style="left:2440px;top:957px;width:106px;height:47px;background:#4a8ccc"></div>
<div class="t w" style="left:2450px;top:967.4px;font-size:22px;color:#fff;font-weight:400;letter-spacing:-0.6px;">Tác vụ</div>
<svg class="b" style="left:2521px;top:978px;" width="14" height="7" viewBox="0 0 14 7"><path d="M0 0 L14 0 L7 7 Z" fill="#fff"/></svg>
<div class="b" style="left:369px;top:1052px;width:2189px;height:64px;background:#f5f5f5"></div>
<div class="b" style="left:369px;top:1051px;width:2189px;height:2px;background:#e0e0e0"></div>
<div class="b" style="left:369px;top:1115px;width:2189px;height:2px;background:#dcdcdc"></div>
<div class="b" style="left:431px;top:1052px;width:2px;height:64px;background:#e2e2e2"></div>
<div class="b" style="left:663px;top:1052px;width:2px;height:64px;background:#e2e2e2"></div>
<div class="b" style="left:879px;top:1052px;width:2px;height:64px;background:#e2e2e2"></div>
<div class="b" style="left:1081px;top:1052px;width:2px;height:64px;background:#e2e2e2"></div>
<div class="b" style="left:1241px;top:1052px;width:2px;height:64px;background:#e2e2e2"></div>
<div class="b" style="left:1399px;top:1052px;width:2px;height:64px;background:#e2e2e2"></div>
<div class="b" style="left:1554px;top:1052px;width:2px;height:64px;background:#e2e2e2"></div>
<div class="b" style="left:1737px;top:1052px;width:2px;height:64px;background:#e2e2e2"></div>
<div class="b" style="left:1950px;top:1052px;width:2px;height:64px;background:#e2e2e2"></div>
<div class="b" style="left:2037px;top:1052px;width:2px;height:64px;background:#e2e2e2"></div>
<div class="b" style="left:2224px;top:1052px;width:2px;height:64px;background:#e2e2e2"></div>
<div class="b" style="left:2375px;top:1052px;width:2px;height:64px;background:#e2e2e2"></div>
<div class="b" style="left:2428px;top:1052px;width:2px;height:64px;background:#e2e2e2"></div>
<div class="b" style="left:2558px;top:342px;width:2px;height:774px;background:#dedede"></div>
<div class="b" style="left:381px;top:1064px;width:39px;height:39px;box-sizing:border-box;border:2px solid #cfcfcf;background:#f9f9f9"></div>
<div class="b" style="left:433px;top:1052px;width:230px;height:64px;overflow:hidden">
<div class="t bd" style="left:20px;top:19.9px;font-size:22px;color:#c4c4c4;font-weight:700;letter-spacing:0.9px">[Ngày (yyyy-mm-dd)]</div>
</div>
<div class="b" style="left:665px;top:1052px;width:214px;height:64px;overflow:hidden">
<div class="t bd" style="left:19px;top:19.9px;font-size:22px;color:#c4c4c4;font-weight:700;letter-spacing:0.9px">[Số HĐ]</div>
</div>
<div class="b" style="left:881px;top:1052px;width:200px;height:64px;overflow:hidden">
<div class="t bd" style="left:18px;top:19.9px;font-size:22px;color:#c4c4c4;font-weight:700;letter-spacing:0.9px">[Kho]</div>
</div>
<div class="b" style="left:1083px;top:1052px;width:158px;height:64px;overflow:hidden">
<div class="t bd" style="left:18px;top:19.9px;font-size:22px;color:#c4c4c4;font-weight:700;letter-spacing:0.9px">[ĐVGH]</div>
</div>
<div class="b" style="left:1243px;top:1052px;width:156px;height:64px;overflow:hidden">
<div class="t bd" style="left:19px;top:19.9px;font-size:22px;color:#c4c4c4;font-weight:700;letter-spacing:0.9px">[Nhân viên]</div>
</div>
<div class="b" style="left:1401px;top:1052px;width:153px;height:64px;overflow:hidden">
<div class="t bd" style="left:19px;top:19.9px;font-size:22px;color:#c4c4c4;font-weight:700;letter-spacing:1.2px">[Nhà cung cấp]</div>
</div>
<div class="b" style="left:1556px;top:1052px;width:181px;height:64px;overflow:hidden">
<div class="t bd" style="left:19px;top:19.9px;font-size:22px;color:#c4c4c4;font-weight:700;letter-spacing:1.0px">[Trạng thái nhập]</div>
</div>
<div class="t bd" style="right:622px;top:1071.9px;font-size:22px;color:#959595;font-weight:700;letter-spacing:2.2px;">688.085.332đ</div>
<div class="t bd" style="right:534px;top:1071.9px;font-size:22px;color:#959595;font-weight:700;letter-spacing:1.2px;">0đ</div>
<div class="t bd" style="right:347px;top:1071.9px;font-size:22px;color:#959595;font-weight:700;letter-spacing:2.2px;">688.085.332đ</div>
<div class="b" style="left:2226px;top:1052px;width:149px;height:64px;overflow:hidden">
<div class="t bd" style="left:18px;top:19.9px;font-size:22px;color:#c4c4c4;font-weight:700;letter-spacing:1.0px">[Trạng thái thanh toán]</div>
</div>
<svg class="b" style="left:2393px;top:1073px;" width="21" height="21" viewBox="0 0 21 21"><g fill="none" stroke="#8a8a8a" stroke-width="2.6"><rect x="1.5" y="3" width="9" height="6" rx="3" transform="rotate(45 6 6)"/><rect x="10.5" y="12" width="9" height="6" rx="3" transform="rotate(45 15 15)"/><path d="M8 8 L13 13"/></g></svg>
<div class="t bd" style="left:2459px;top:1071.9px;font-size:22px;color:#8e8e8e;font-weight:700;letter-spacing:0.9px;">Tác vụ</div>
<div class="b" style="left:369px;top:1117px;width:2191px;height:107px;background:#eff3f8"></div>
<div class="b" style="left:367px;top:1224px;width:2193px;height:3px;background:#dcdcdc"></div>
<div class="t" style="left:391px;top:1157.0px;font-size:26px;color:#333;font-weight:400;letter-spacing:0.1px;">Hiển thị 1 đến 6 của 6</div>
<div class="b" style="left:2232px;top:1138px;width:287px;height:53px;box-sizing:border-box;border:2px solid #e2e2e2;background:#fafafa"></div>
<div class="b" style="left:2340px;top:1138px;width:52px;height:53px;background:#6faed9"></div>
<div class="t" style="left:2253px;top:1152.9px;font-size:22px;color:#777;font-weight:400;letter-spacing:0px;">&lt; trước</div>
<div class="t w" style="left:2359px;top:1152.9px;font-size:22px;color:#fff;font-weight:400;letter-spacing:0px;">1</div>
<div class="t" style="left:2411px;top:1152.9px;font-size:22px;color:#777;font-weight:400;letter-spacing:0px;">Kế tiếp &gt;</div>
<div class="t" style="left:1207px;top:1260.2px;font-size:24px;color:#444;font-weight:400;letter-spacing:0.1px;">© 2022 CTY TNHH MINH HẢI BÌNH PHƯỚC</div>
</body></html>
